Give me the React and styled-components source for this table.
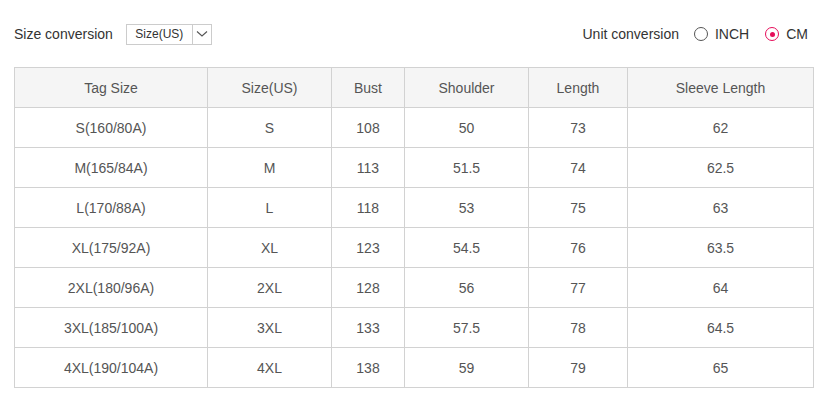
import React from 'react';
import styled, { createGlobalStyle } from 'styled-components';

const GlobalStyle = createGlobalStyle`
  body {
    margin: 0;
    background: #fff;
    font-family: "Liberation Sans", Arial, sans-serif;
  }
`;

const Page = styled.div`
  width: 828px;
  padding: 0 14px;
  box-sizing: border-box;
`;

const TopBar = styled.div`
  height: 67px;
  display: flex;
  align-items: center;
  justify-content: space-between;
  padding-right: 6px;
  padding-top: 1px;
  box-sizing: border-box;
  color: #333;
  font-size: 14px;
`;

const Group = styled.div`
  display: flex;
  align-items: center;
`;

const Label = styled.span`
  margin-right: ${({ gap }) => gap}px;
`;

const Select = styled.div`
  display: flex;
  align-items: stretch;
  height: 21px;
  width: 86px;
  border: 1px solid #ccc;
  box-sizing: border-box;
  font-size: 12px;
  color: #333;
`;

const SelectValue = styled.div`
  flex: 1;
  display: flex;
  align-items: center;
  justify-content: center;
  border-right: 1px solid #ccc;
`;

const SelectArrow = styled.div`
  width: 18px;
  display: flex;
  align-items: center;
  justify-content: center;
`;

const Radio = styled.label`
  display: flex;
  align-items: center;
  margin-left: ${({ gap }) => gap}px;
`;

const Circle = styled.span`
  width: 14px;
  height: 14px;
  border-radius: 50%;
  border: 1px solid ${({ checked }) => (checked ? '#e60d5a' : '#555')};
  box-sizing: border-box;
  margin-right: 7px;
  display: flex;
  align-items: center;
  justify-content: center;

  &::after {
    content: '';
    width: 5px;
    height: 5px;
    border-radius: 50%;
    background: ${({ checked }) => (checked ? '#e60d5a' : 'transparent')};
  }
`;

const Table = styled.table`
  width: 799px;
  table-layout: fixed;
  border-collapse: collapse;
  font-size: 14px;
  color: #555;
`;

const Th = styled.th`
  height: 39px;
  padding: 0;
  font-weight: normal;
  background: #f5f5f5;
  border: 1px solid #d2d2d2;
  text-align: center;
`;

const Td = styled.td`
  height: 39px;
  padding: 0;
  border: 1px solid #d2d2d2;
  text-align: center;
`;

const columns = [
  { title: 'Tag Size', width: 193 },
  { title: 'Size(US)', width: 124 },
  { title: 'Bust', width: 73 },
  { title: 'Shoulder', width: 124 },
  { title: 'Length', width: 99 },
  { title: 'Sleeve Length', width: 186 },
];

const rows = [
  ['S(160/80A)', 'S', '108', '50', '73', '62'],
  ['M(165/84A)', 'M', '113', '51.5', '74', '62.5'],
  ['L(170/88A)', 'L', '118', '53', '75', '63'],
  ['XL(175/92A)', 'XL', '123', '54.5', '76', '63.5'],
  ['2XL(180/96A)', '2XL', '128', '56', '77', '64'],
  ['3XL(185/100A)', '3XL', '133', '57.5', '78', '64.5'],
  ['4XL(190/104A)', '4XL', '138', '59', '79', '65'],
];

const Chevron = () => (
  <svg width="12" height="8" viewBox="0 0 12 8">
    <path d="M1 1.5 L6 6 L11 1.5" fill="none" stroke="#555" strokeWidth="1.1" />
  </svg>
);

const App = () => (
  <>
    <GlobalStyle />
    <Page>
      <TopBar>
        <Group>
          <Label gap={13}>Size conversion</Label>
          <Select>
            <SelectValue>Size(US)</SelectValue>
            <SelectArrow>
              <Chevron />
            </SelectArrow>
          </Select>
        </Group>
        <Group>
          <Label gap={3}>Unit conversion</Label>
          <Radio gap={12}>
            <Circle />
            INCH
          </Radio>
          <Radio gap={16}>
            <Circle checked />
            CM
          </Radio>
        </Group>
      </TopBar>
      <Table>
        <colgroup>
          {columns.map((c) => (
            <col key={c.title} style={{ width: c.width }} />
          ))}
        </colgroup>
        <thead>
          <tr>
            {columns.map((c) => (
              <Th key={c.title}>{c.title}</Th>
            ))}
          </tr>
        </thead>
        <tbody>
          {rows.map((r) => (
            <tr key={r[0]}>
              {r.map((v, i) => (
                <Td key={i}>{v}</Td>
              ))}
            </tr>
          ))}
        </tbody>
      </Table>
    </Page>
  </>
);

export default App;
